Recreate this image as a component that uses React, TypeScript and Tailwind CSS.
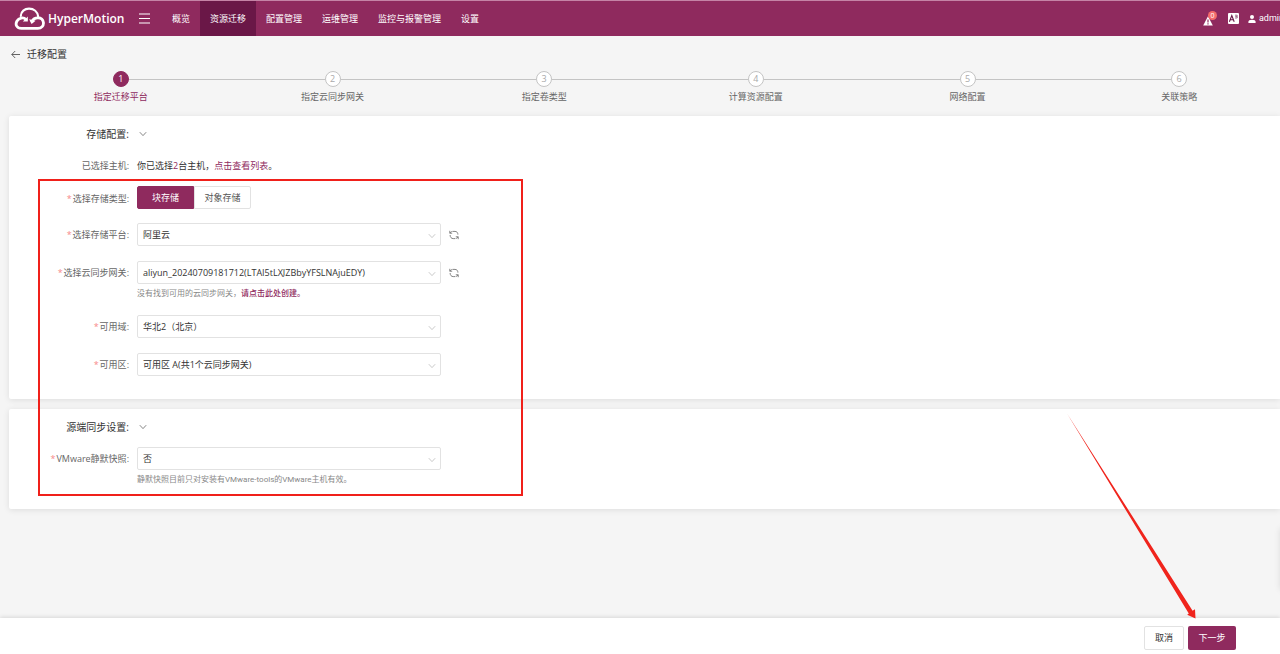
import React, { useState } from 'react';
import clsx from 'clsx';

const navItems = ['概览', '资源迁移', '配置管理', '运维管理', '监控与报警管理', '设置'];

const steps = ['指定迁移平台', '指定云同步网关', '指定卷类型', '计算资源配置', '网络配置', '关联策略'];

function LogoIcon() {
  return (
    <svg viewBox="0 0 32 24" className="h-6 w-8" fill="none" stroke="#fff" strokeWidth="2.8" strokeLinecap="round">
      <path d="M12 12.4 C9.4 9.8 4.8 10.8 3 14 C0.8 17.8 3 21.4 7.4 21.4 H23.8 C27.6 21.4 29.8 18.8 29.4 15.4 C29 12.6 26.8 10.8 24 10.8 C21 10.8 19 12 18 14.4" />
      <path d="M6.8 9 C7 4.6 10.6 1.7 15 1.7 C19.8 1.7 23.6 4.8 24.2 9.6" strokeWidth="2.2" />
      <path d="M13.8 9.4 V14.4 H8.8 Z" fill="#fff" stroke="none" />
      <path d="M15.2 12.2 L17.6 17 L21.6 13.8 Z" fill="#fff" stroke="none" />
    </svg>
  );
}

function Header() {
  return (
    <header className="flex h-9 items-center overflow-hidden border-t border-[#c583a6] bg-[#8f2a5e] pl-[14px] text-[9px] text-white">
      <LogoIcon />
      <span className="ml-[2px] w-[91px] text-[12px] font-semibold">HyperMotion</span>
      <button type="button" aria-label="菜单" className="w-[23px]">
        <svg viewBox="0 0 11 12" className="h-3 w-[11px]" stroke="#fff" strokeWidth="1.2">
          <path d="M0 1H11M0 5.5H11M0 10H11" />
        </svg>
      </button>
      <nav className="flex h-full">
        {navItems.map((item, i) => (
          <a
            key={item}
            href="#"
            className={clsx('flex h-full items-center px-[10px] whitespace-nowrap', i === 1 && 'bg-[#6a1747]')}
          >
            {item}
          </a>
        ))}
      </nav>
      <div className="-mr-1 ml-auto flex shrink-0 items-center">
        <button type="button" aria-label="告警" className="relative mr-[11px] h-4 w-[14px]">
          <svg viewBox="0 0 10 10" className="mt-[5px] h-[10px] w-[10px]">
            <path d="M5 0.3 L9.8 9.6 H0.2 Z" fill="#fff" />
            <path d="M5 3.4V6.4M5 7.3V8.6" stroke="#8f2a5e" strokeWidth="1.2" />
          </svg>
          <span className="absolute top-0 left-[5px] flex h-[9px] w-[9px] items-center justify-center rounded-full bg-[#f56c6c] text-[7px] leading-none">
            0
          </span>
        </button>
        <button type="button" aria-label="语言" className="mr-[9px]">
          <svg viewBox="0 0 11 11" className="h-[11px] w-[11px]">
            <rect width="11" height="11" rx="1" fill="#fff" />
            <path d="M1.4 8.7 L3.8 2.6 L6.2 8.7 M2.3 6.7H5.3" stroke="#6a1747" strokeWidth="1.1" fill="none" />
            <path d="M7 2.2H9.2V5H7M7.2 3.6H9" stroke="#6a1747" strokeWidth="0.6" fill="none" />
          </svg>
        </button>
        <a href="#" className="flex items-center gap-[3px] font-[Roboto,sans-serif]">
          <svg viewBox="0 0 8 8" className="h-2 w-2" fill="#fff">
            <circle cx="4" cy="2" r="2" />
            <path d="M0.4 8 V6.8 C0.4 5.4 1.6 4.7 4 4.7 C6.4 4.7 7.6 5.4 7.6 6.8 V8 Z" />
          </svg>
          admin
        </a>
      </div>
    </header>
  );
}

function Stepper() {
  return (
    <ol className="-mr-[5px] ml-[15px] grid grid-cols-6">
      {steps.map((step, i) => (
        <li key={step} className={clsx('text-center', i === 0 ? 'text-[#8f2a5e]' : 'text-[#666]')}>
          <div className="flex items-center">
            <span className={clsx('h-px flex-1', i > 0 && 'bg-[#c4c4c4]')} />
            <span
              className={clsx(
                'flex h-4 w-4 items-center justify-center rounded-full border',
                i === 0 ? 'border-[#8f2a5e] bg-[#8f2a5e] text-white' : 'border-[#c4c4c4] bg-white text-[#aaa]',
              )}
            >
              {i + 1}
            </span>
            <span className={clsx('h-px flex-1', i < steps.length - 1 && 'bg-[#c4c4c4]')} />
          </div>
          <div className="mt-1 leading-3">{step}</div>
        </li>
      ))}
    </ol>
  );
}

function Chevron({ className }: { className?: string }) {
  return (
    <svg viewBox="0 0 8 8" className={clsx('h-2 w-2', className)} fill="none" stroke="currentColor" strokeWidth="0.8">
      <path d="M0.8 2.2 L4 5.6 L7.2 2.2" />
    </svg>
  );
}

function RefreshButton() {
  return (
    <button type="button" aria-label="刷新" className="ml-2 text-[#777]">
      <svg viewBox="0 0 10 10" className="h-[10px] w-[10px]" fill="none" stroke="currentColor" strokeWidth="0.9">
        <path d="M3.4 1.4 H6 C7.8 1.4 8.9 2.6 8.9 4.6" />
        <path d="M1.1 5 C1.1 7.2 2.4 8.6 4.2 8.6 H6.4" />
        <path d="M0.8 0.8 V3.2 H3.2 M0.8 3.2 L2.8 1.4" />
        <path d="M9.2 9.2 V6.8 H6.8 M9.2 6.8 L7.2 8.6" />
      </svg>
    </button>
  );
}

interface SelectRowProps {
  id: string;
  label: string;
  value: string;
  refresh?: boolean;
  children?: React.ReactNode;
}

function SelectRow({ id, label, value, refresh, children }: SelectRowProps) {
  return (
    <div className="flex gap-2">
      <label htmlFor={id} className="w-[120px] shrink-0 text-right leading-[23px] text-[#666]">
        <span className="mr-[1px] text-[#f78989]">*</span>
        {label}:
      </label>
      <div>
        <div className="flex items-center">
          <div className="relative w-[304px]">
            <select
              id={id}
              className="block h-[23px] w-full appearance-none rounded-xs border border-[#e2e2e2] bg-white px-[5px] text-[#333]"
            >
              <option>{value}</option>
            </select>
            <Chevron className="pointer-events-none absolute top-[9px] right-[5px] text-[#bbb]" />
          </div>
          {refresh && <RefreshButton />}
        </div>
        {children && (
          <p className="mt-1 font-[Roboto,'Noto_Sans_CJK_SC',sans-serif] text-[8px] leading-3 text-[#888]">{children}</p>
        )}
      </div>
    </div>
  );
}

function SectionTitle({ children }: { children: React.ReactNode }) {
  return (
    <div className="flex items-center">
      <h2 className="w-[120px] text-right text-[10px] leading-4 text-[#333]">{children}</h2>
      <button type="button" aria-label="收起" className="ml-[10px] text-[#666]">
        <Chevron />
      </button>
    </div>
  );
}

function StorageTypeRow() {
  const [type, setType] = useState('块存储');
  return (
    <fieldset className="flex h-[22px] gap-2">
      <legend className="float-left w-[120px] shrink-0 text-right leading-[25px] text-[#666]">
        <span className="mr-[1px] text-[#f78989]">*</span>
        选择存储类型:
      </legend>
      <div className="flex h-[23px]">
        {['块存储', '对象存储'].map((t) => (
          <label
            key={t}
            className={clsx(
              'flex w-[57px] items-center justify-center border',
              type === t
                ? 'rounded-l-xs border-[#8f2a5e] bg-[#8f2a5e] text-white'
                : 'rounded-r-xs border-[#e2e2e2] bg-white text-[#555]',
            )}
          >
            <input type="radio" name="storage-type" className="sr-only" checked={type === t} onChange={() => setType(t)} />
            {t}
          </label>
        ))}
      </div>
    </fieldset>
  );
}

export default function App() {
  return (
    <div className="relative flex min-h-screen flex-col overflow-hidden bg-[#f5f5f5] font-['Open_Sans','Noto_Sans_CJK_SC',sans-serif] text-[9px] text-[#333]">
      <Header />

      <div className="flex items-center gap-[7px] pt-[10px] pl-[11px]">
        <a href="#" aria-label="返回">
          <svg viewBox="0 0 9 9" className="h-[9px] w-[9px]" fill="none" stroke="#555" strokeWidth="0.9">
            <path d="M9 4.5H0.8M4.2 1L0.8 4.5L4.2 8" />
          </svg>
        </a>
        <h1 className="text-[10px] leading-4">迁移配置</h1>
      </div>

      <div className="mt-[9px]">
        <Stepper />
      </div>

      <main className="relative mt-[13px] ml-[9px] flex flex-col gap-[10px]">
        <section className="rounded-l-xs bg-white pt-[10px] pb-[23px] shadow-[0_1px_6px_rgba(0,0,0,0.1)]">
          <SectionTitle>存储配置:</SectionTitle>
          <div className="mt-4 flex gap-2 leading-4">
            <span className="w-[120px] text-right text-[#666]">已选择主机:</span>
            <span>
              你已选择<span className="text-[#8f2a5e]">2</span>台主机，
              <a href="#" className="text-[#8f2a5e]">
                点击查看列表
              </a>
              。
            </span>
          </div>
          <div className="mt-3 flex flex-col gap-[15px]">
            <StorageTypeRow />
            <SelectRow id="platform" label="选择存储平台" value="阿里云" refresh />
            <SelectRow id="gateway" label="选择云同步网关" value="aliyun_20240709181712(LTAI5tLXJZBbyYFSLNAjuEDY)" refresh>
              没有找到可用的云同步网关，
              <a href="#" className="font-medium text-[#8f2a5e]">
                请点击此处创建。
              </a>
            </SelectRow>
            <SelectRow id="region" label="可用域" value="华北2（北京）" />
            <SelectRow id="zone" label="可用区" value="可用区 A(共1个云同步网关)" />
          </div>
        </section>

        <section className="rounded-l-xs bg-white pt-[10px] pb-[23px] shadow-[0_1px_6px_rgba(0,0,0,0.1)]">
          <SectionTitle>源端同步设置:</SectionTitle>
          <div className="mt-3">
            <SelectRow id="snapshot" label="VMware静默快照" value="否">
              静默快照目前只对安装有VMware-tools的VMware主机有效。
            </SelectRow>
          </div>
        </section>

        {/* highlight around the required fields */}
        <div className="pointer-events-none absolute top-[63px] bottom-[13px] left-[29px] w-[485px] border-2 border-[#f0201a]" />
      </main>

      {/* collapsed side drawer */}
      <div className="absolute right-[-10px] bottom-[64px] h-[62px] w-[10px] shadow-[0_0_6px_rgba(0,0,0,0.1)]" />

      <footer className="mt-auto flex h-9 items-center justify-end gap-1 bg-white pt-1 pr-11 shadow-[0_-1px_4px_rgba(0,0,0,0.12)]">
        <button type="button" className="h-6 w-10 rounded-xs border border-[#e2e2e2] bg-white">
          取消
        </button>
        <button type="button" className="h-6 w-12 rounded-xs bg-[#8f2a5e] text-white">
          下一步
        </button>
      </footer>

      {/* pointer to the next button */}
      <svg viewBox="0 0 130 206" className="pointer-events-none absolute right-[83px] bottom-[35px] h-[206px] w-[130px]">
        <path d="M0 0.5 L121.8 200.6 L120.2 201.8 L128.5 205.5 L128 196.2 L125.6 197.8 Z" fill="#f0241c" />
      </svg>
    </div>
  );
}
